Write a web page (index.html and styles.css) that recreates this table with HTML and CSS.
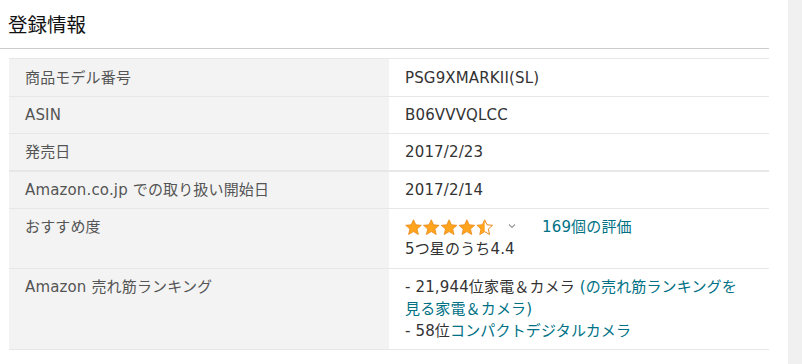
FILE: index.html
```html
<!DOCTYPE html>
<html lang="ja">
<head>
<meta charset="utf-8">
<title>登録情報</title>
<link rel="stylesheet" href="styles.css">
</head>
<body>
<div class="page">
  <main class="content">
    <h2 class="heading">登録情報</h2>
    <table class="details">
      <tr class="first">
        <th>商品モデル番号</th>
        <td>PSG9XMARKII(SL)</td>
      </tr>
      <tr>
        <th>ASIN</th>
        <td>B06VVVQLCC</td>
      </tr>
      <tr>
        <th>発売日</th>
        <td>2017/2/23</td>
      </tr>
      <tr class="thick">
        <th>Amazon.co.jp での取り扱い開始日</th>
        <td>2017/2/14</td>
      </tr>
      <tr class="tall">
        <th>おすすめ度</th>
        <td>
          <div class="rating">
            <svg class="stars" width="89" height="17" viewBox="0 0 89 17" aria-hidden="true">
              <defs>
                <path id="star" d="M8.5 0.8 L10.8 5.8 L16.3 6.3 L12.1 10 L13.4 15.5 L8.5 12.6 L3.6 15.5 L4.9 10 L0.7 6.3 L6.2 5.8 Z"/>
                <clipPath id="half"><rect x="0" y="0" width="8.5" height="17"/></clipPath>
              </defs>
              <use href="#star" x="0" fill="#ffa41c" stroke="#e8891a" stroke-width="0.8"/>
              <use href="#star" x="17.8" fill="#ffa41c" stroke="#e8891a" stroke-width="0.8"/>
              <use href="#star" x="35.6" fill="#ffa41c" stroke="#e8891a" stroke-width="0.8"/>
              <use href="#star" x="53.4" fill="#ffa41c" stroke="#e8891a" stroke-width="0.8"/>
              <g transform="translate(71.2 0)">
                <use href="#star" fill="#fff" stroke="#e8891a" stroke-width="1"/>
                <use href="#star" fill="#ffa41c" clip-path="url(#half)"/>
              </g>
            </svg>
            <svg class="chev" width="8" height="6" viewBox="0 0 8 6" aria-hidden="true">
              <path d="M1 1.5 L4 4.5 L7 1.5" fill="none" stroke="#999" stroke-width="1.2"/>
            </svg>
            <a class="link count" href="#">169個の評価</a>
          </div>
          <div>5つ星のうち4.4</div>
        </td>
      </tr>
      <tr>
        <th>Amazon 売れ筋ランキング</th>
        <td>
          <div>- 21,944位家電＆カメラ <a class="link" href="#">(の売れ筋ランキングを<br>見る家電＆カメラ)</a></div>
          <div>- 58位<a class="link" href="#">コンパクトデジタルカメラ</a></div>
        </td>
      </tr>
    </table>
  </main>
  <aside class="rail"></aside>
</div>
</body>
</html>
```

FILE: styles.css
```css
html, body {
  margin: 0;
  padding: 0;
  background: #fff;
}

body {
  font-family: "DejaVu Sans", "Noto Sans CJK JP", sans-serif;
  font-size: 15px;
  color: #333;
}

.page {
  display: flex;
  height: 364px;
  overflow: hidden;
}

.content {
  width: 769px;
  flex: none;
}

.rail {
  margin-left: 19px;
  flex: 1;
  background: #f0f0f0;
}

.heading {
  margin: 0;
  padding: 12px 8px 8px;
  font-size: 19.5px;
  line-height: 28px;
  font-weight: normal;
  color: #111;
  border-bottom: 1px solid #cccccc;
}

.details {
  margin: 9px 0 0 9px;
  width: 760px;
  border-collapse: collapse;
  table-layout: fixed;
}

.details th,
.details td {
  text-align: left;
  vertical-align: top;
  font-weight: normal;
  padding: 7px 16px 7px;
  line-height: 22px;
  border-top: 1px solid #e7e7e7;
  border-bottom: 1px solid #e7e7e7;
  letter-spacing: 0.15px;
}

.details tr.first th,
.details tr.first td {
  padding-top: 8px;
}

.details tr.tall th,
.details tr.tall td {
  padding-bottom: 8px;
}

.details th {
  width: 348px;
  background: #f3f3f3;
  color: #555;
}

.details td {
  color: #333;
}

.details tr.thick th,
.details tr.thick td {
  border-top: 2px solid #e7e7e7;
}

.rating {
  display: flex;
  align-items: center;
  height: 22px;
}

.stars {
  display: block;
}

.chev {
  display: block;
  margin-left: 14px;
  margin-top: -3px;
}

.count {
  margin-left: 26px;
}

.link {
  color: #007185;
  text-decoration: none;
}
```
